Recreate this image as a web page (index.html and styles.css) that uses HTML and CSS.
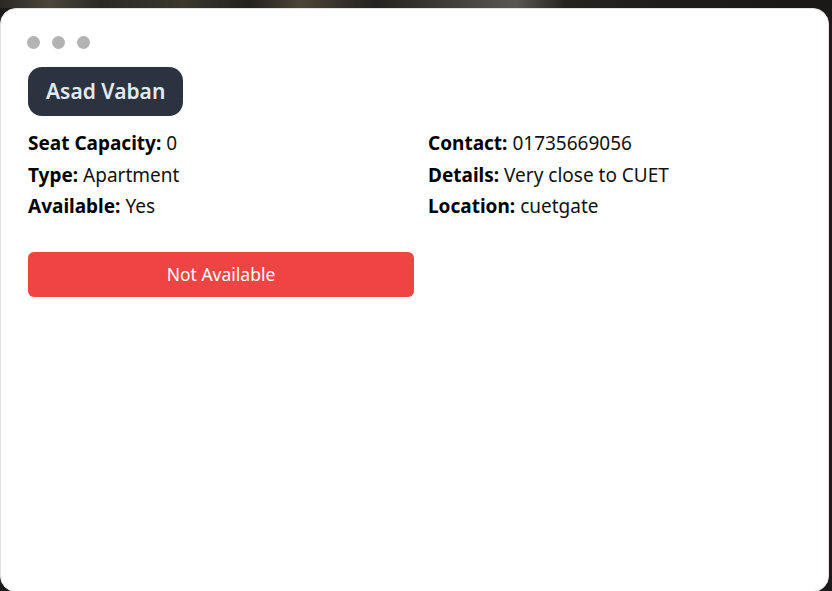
FILE: index.html
```html
<!DOCTYPE html>
<html>
<head>
<meta charset="utf-8">
<link rel="stylesheet" href="styles.css">
</head>
<body>
<div class="backdrop"></div>
<main class="card">
  <div class="dots">
    <span class="dot"></span><span class="dot"></span><span class="dot"></span>
  </div>
  <h1 class="badge">Asad Vaban</h1>
  <div class="info">
    <div class="col">
      <p><b>Seat Capacity:</b> 0</p>
      <p><b>Type:</b> Apartment</p>
      <p><b>Available:</b> Yes</p>
    </div>
    <div class="col">
      <p><b>Contact:</b> 01735669056</p>
      <p><b>Details:</b> Very close to CUET</p>
      <p><b>Location:</b> cuetgate</p>
    </div>
  </div>
  <button class="btn">Not Available</button>
</main>
</body>
</html>
```

FILE: styles.css
```css
* { box-sizing: border-box; }
html, body { margin: 0; padding: 0; }
body {
  width: 832px;
  height: 591px;
  overflow: hidden;
  background: #1c1b19;
  font-family: "Noto Sans", "Open Sans", sans-serif;
  position: relative;
}
.backdrop {
  height: 8px;
  background: linear-gradient(90deg, #2a2823 0%, #4a463a 6%, #2b2a24 12%, #3b372c 22%, #23221d 30%, #4d4536 36%, #24231f 45%, #5a574e 62%, #25241f 68%, #1e1d1a 80%, #191816 100%);
}
.card {
  width: 829px;
  height: 584px;
  background: #fff;
  border: 1px solid #e3e3e6;
  border-radius: 16px;
  padding: 27px 27px;
}
.dots {
  display: flex;
  gap: 12px;
  margin-left: -1px;
  margin-bottom: 18px;
}
.dot {
  width: 13px;
  height: 13px;
  border-radius: 50%;
  background: #b3b3b3;
}
.badge {
  display: inline-block;
  margin: 0 0 12px 0;
  background: #2b3240;
  color: #e1e9f5;
  font-size: 21px;
  font-weight: 600;
  line-height: 49px;
  height: 49px;
  padding: 0 18px;
  border-radius: 14px;
}
.info {
  display: grid;
  grid-template-columns: 400px 1fr;
}
.info p {
  margin: 0;
  font-size: 19px;
  line-height: 31.5px;
  color: #111;
}
.info b { font-weight: 700; color: #000; }
.btn {
  display: block;
  margin-top: 29px;
  width: 386px;
  height: 45px;
  background: #ef4444;
  color: #fff;
  border: 0;
  border-radius: 6px;
  font-family: inherit;
  font-size: 17.5px;
}
```
